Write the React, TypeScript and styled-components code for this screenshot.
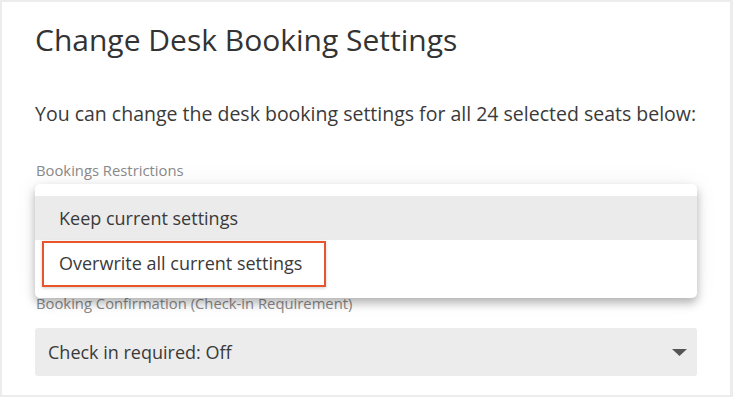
import React from 'react';
import styled, { createGlobalStyle } from 'styled-components';

const GlobalStyle = createGlobalStyle`
  html, body {
    margin: 0;
    padding: 0;
    background: #ffffff;
  }
  body {
    font-family: 'Open Sans', 'Liberation Sans', sans-serif;
    color: #333333;
  }
`;

const Frame = styled.div`
  width: 733px;
  height: 397px;
  box-sizing: border-box;
  border: 2px solid #ececec;
  border-right-width: 3px;
  background: #ffffff;
  padding: 18px 33px 0 33px;
  overflow: hidden;
`;

const Title = styled.h1`
  margin: 0;
  font-size: 30px;
  font-weight: 400;
  line-height: 40px;
  color: #333333;
  white-space: nowrap;
`;

const Intro = styled.p`
  margin: 41px 0 0;
  font-size: 19.5px;
  line-height: 26px;
  color: #3a3a3a;
  white-space: nowrap;
`;

const Field = styled.div<{ $gap: number }>`
  margin-top: ${(p) => p.$gap}px;
  display: flex;
  flex-direction: column;
`;

const Label = styled.label`
  font-size: 14.8px;
  line-height: 20px;
  color: #8a8a8a;
  padding-left: 1px;
  white-space: nowrap;
`;

const SelectBox = styled.div<{ $top: number }>`
  position: relative;
  margin-top: ${(p) => p.$top}px;
  height: 48px;
  border-radius: 3px;
  background: #ececec;
  display: flex;
  align-items: center;
  padding: 0 10px 0 13px;
  font-size: 18px;
  color: #3a3a3a;
`;

const SelectText = styled.span`
  flex: 1;
`;

const Caret = styled.svg`
  width: 15px;
  height: 7px;
  fill: #555555;
`;

const FocusMark = styled.span`
  position: absolute;
  left: 0;
  bottom: 0;
  width: 2px;
  height: 4px;
  background: #3d7fd6;
`;

const Menu = styled.ul`
  position: absolute;
  top: -9px;
  left: 0;
  right: 0;
  margin: 0;
  padding: 12px 0 13px;
  list-style: none;
  background: #ffffff;
  border-radius: 5px;
  box-shadow: 0 5px 10px rgba(0, 0, 0, 0.28), 0 0 24px rgba(0, 0, 0, 0.06);
  z-index: 2;
`;

const MenuItem = styled.li<{ $active?: boolean }>`
  position: relative;
  height: 44px;
  display: flex;
  align-items: center;
  padding-left: 24px;
  font-size: 18px;
  color: #3a3a3a;
  background: ${(p) => (p.$active ? '#ebebeb' : '#ffffff')};
  margin-bottom: ${(p) => (p.$active ? '1px' : '0')};
`;

const Highlight = styled.span`
  position: absolute;
  left: 7px;
  top: 0;
  width: 284px;
  height: 46px;
  box-sizing: border-box;
  border: 2px solid #e8552d;
  box-shadow: 0 1px 3px rgba(0, 0, 0, 0.2);
  pointer-events: none;
`;

export default function App() {
  return (
    <>
      <GlobalStyle />
      <Frame>
        <Title>Change Desk Booking Settings</Title>
        <Intro>
          You can change the desk booking settings for all 24 selected seats below:
        </Intro>
        <Field $gap={33}>
          <Label>Bookings Restrictions</Label>
          <SelectBox $top={13}>
            <FocusMark />
            <Menu>
              <MenuItem $active>Keep current settings</MenuItem>
              <MenuItem>
                <Highlight />
                Overwrite all current settings
              </MenuItem>
            </Menu>
          </SelectBox>
        </Field>
        <Field $gap={52}>
          <Label>Booking Confirmation (Check-in Requirement)</Label>
          <SelectBox $top={15}>
            <SelectText>Check in required: Off</SelectText>
            <Caret viewBox="0 0 15 7">
              <path d="M0 0h15L7.5 7z" />
            </Caret>
          </SelectBox>
        </Field>
      </Frame>
    </>
  );
}
